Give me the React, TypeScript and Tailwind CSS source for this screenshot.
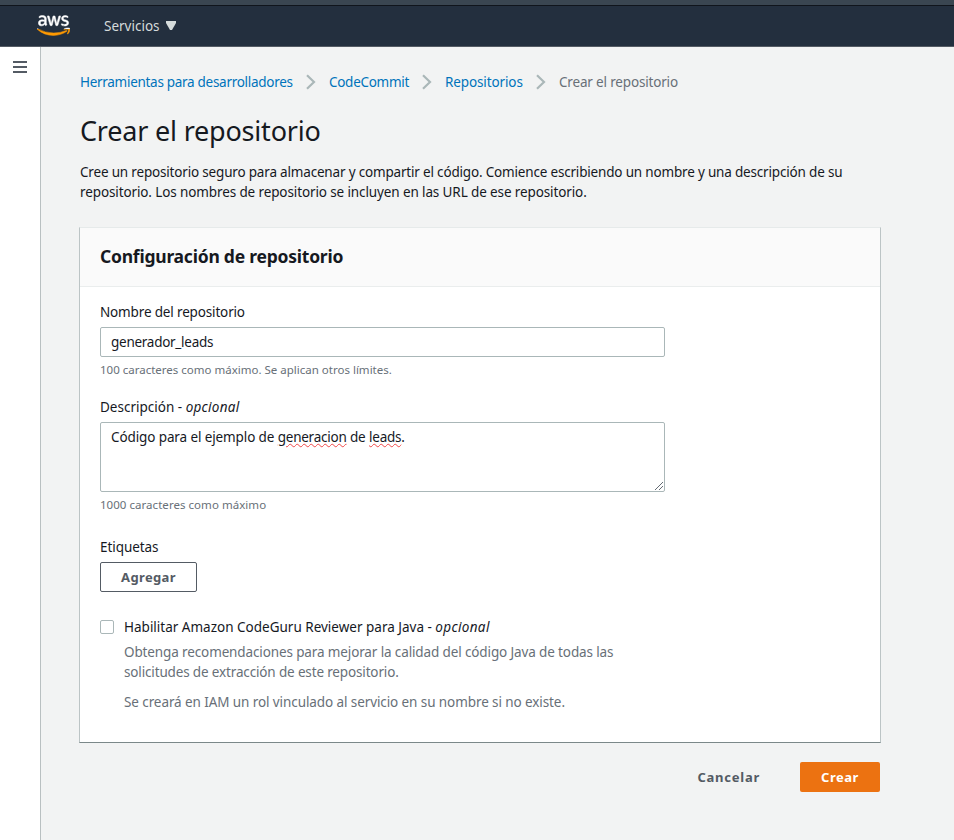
import { FaAws } from "react-icons/fa";
import type { ReactNode } from "react";

function Chevron() {
  return (
    <svg className="mx-[13px] h-4 w-[10px] shrink-0" viewBox="0 0 10 16" fill="none" stroke="#aab7b8" strokeWidth="2.2">
      <path d="M1 1.2 8 8 1 14.8" />
    </svg>
  );
}

function Misspelled({ children }: { children: ReactNode }) {
  return (
    <span className="tracking-[-0.24px] underline decoration-[#f04848] decoration-wavy decoration-[0.6px] underline-offset-1">{children}</span>
  );
}

function TopBar() {
  return (
    <header className="flex h-[47px] shrink-0 items-center border-t-[5px] border-b border-t-[#3a4651] border-b-[#545b64] bg-[#232f3e] pl-[37px] shadow-[inset_0_1px_0_#10151c]">
      <svg width="0" height="0" className="absolute">
        <linearGradient id="aws-logo" x1="0" y1="0" x2="0" y2="1">
          <stop offset="0.66" stopColor="#ffffff" />
          <stop offset="0.66" stopColor="#ff9900" />
        </linearGradient>
      </svg>
      <FaAws className="h-[27px] w-[33px] [&>path]:fill-[url(#aws-logo)] [&>path]:stroke-[url(#aws-logo)] [&>path]:[stroke-width:10]" />
      <span className="ml-[34px] w-[56px] pt-px text-[#d5dbdb]">Servicios</span>
      <svg className="ml-[6px] h-[9px] w-[10px]" viewBox="0 0 10 9" fill="#d5dbdb">
        <path d="M0 0h10v2L6 9H4L0 2z" />
      </svg>
    </header>
  );
}

function Breadcrumbs() {
  return (
    <nav className="flex h-5 items-center whitespace-nowrap text-[#0073bb]">
      <span className="w-[213px] tracking-[-0.29px]">Herramientas para desarrolladores</span>
      <Chevron />
      <span className="w-[80px] tracking-[-0.29px]">CodeCommit</span>
      <Chevron />
      <span className="w-[78px] tracking-[-0.12px]">Repositorios</span>
      <Chevron />
      <span className="tracking-[-0.17px] text-[#687078]">Crear el repositorio</span>
    </nav>
  );
}

export default function App() {
  return (
    <div className="flex h-[840px] w-[954px] flex-col overflow-hidden bg-[#f2f3f3] font-['Noto_Sans',sans-serif] text-[13.5px] leading-5 text-[#16191f]">
      <TopBar />
      <div className="flex flex-1">
        <aside className="w-[41px] shrink-0 border-r border-[#b9c0c1] bg-white pt-[14px] pl-[13px]">
          <div className="flex h-3 w-[14px] flex-col justify-between">
            <div className="h-[2px] bg-[#545b64]" />
            <div className="h-[2px] bg-[#545b64]" />
            <div className="h-[2px] bg-[#545b64]" />
          </div>
        </aside>
        <main className="w-[839px] pt-[25px] pl-[39px] whitespace-nowrap">
          <Breadcrumbs />
          <h1 className="mt-[21px] text-[27px] leading-9 tracking-[-0.2px]">Crear el repositorio</h1>
          <p className="mt-[13px]">
            <span className="tracking-[-0.18px]">
              Cree un repositorio seguro para almacenar y compartir el código. Comience escribiendo un nombre y una descripción de su
            </span>
            <br />
            <span className="tracking-[-0.115px]">repositorio. Los nombres de repositorio se incluyen en las URL de ese repositorio.</span>
          </p>
          <section className="mt-[25px] -ml-px h-[516px] w-[802px] border border-t-[#e6eaea] border-r-[#bcc4c5] border-b-[#7b8889] border-l-[#bcc4c5] bg-white">
            <div className="h-[59px] border-b border-[#eaeded] bg-[#fafafa] px-5 pt-4">
              <h2 className="text-[17.5px] leading-6 font-bold tracking-[-0.23px]">Configuración de repositorio</h2>
            </div>
            <div className="px-5 pt-[15px]">
              <div className="tracking-[-0.155px]">Nombre del repositorio</div>
              <div className="mt-[5px] h-[30px] w-[565px] rounded-[2px] border border-[#aab7b8] px-[10px] pt-1 tracking-[-0.27px]">generador_leads</div>
              <div className="mt-1 text-[11.5px] leading-[18px] text-[#687078]">100 caracteres como máximo. Se aplican otros límites.</div>
              <div className="mt-[18px]">
                Descripción - <em className="tracking-[0.29px]">opcional</em>
              </div>
              <div className="mt-[5px] flex h-[70px] w-[565px] justify-between rounded-[2px] border border-[#aab7b8] pt-1 pl-[10px] tracking-[-0.11px]">
                <span>
                  Código para el ejemplo de <Misspelled>generacion</Misspelled> de <Misspelled>leads</Misspelled>.
                </span>
                <svg className="mr-px mb-px h-2 w-2 self-end" viewBox="0 0 8 8" stroke="#545b64" strokeWidth="0.9">
                  <path d="M0 8 8 0M4 8l4-4" />
                </svg>
              </div>
              <div className="mt-1 text-[11.5px] leading-[18px] tracking-[0.04px] text-[#687078]">1000 caracteres como máximo</div>
              <div className="mt-[23px] tracking-[-0.07px]">Etiquetas</div>
              <button className="mt-[5px] block h-[30px] w-[97px] rounded-[2px] border border-[#545b64] text-[13px] font-bold tracking-[0.35px] text-[#545b64]">
                Agregar
              </button>
              <div className="mt-[25px] flex">
                <div className="mt-[3px] mr-[10px] size-[14px] shrink-0 rounded-[2px] border border-[#aab7b8]" />
                <div>
                  <div>
                    Habilitar Amazon CodeGuru Reviewer para Java - <em className="tracking-[0.35px]">opcional</em>
                  </div>
                  <p className="mt-[5px] text-[#687078]">
                    <span className="tracking-[-0.125px]">Obtenga recomendaciones para mejorar la calidad del código Java de todas las</span>
                    <br />
                    <span className="tracking-[-0.15px]">solicitudes de extracción de este repositorio.</span>
                  </p>
                  <p className="mt-[10px] tracking-[-0.09px] text-[#687078]">Se creará en IAM un rol vinculado al servicio en su nombre si no existe.</p>
                </div>
              </div>
            </div>
          </section>
          <div className="mt-[19px] flex justify-end text-[13px] font-bold">
            <button className="mr-10 h-[30px] tracking-[0.75px] text-[#545b64]">Cancelar</button>
            <button className="h-[30px] w-[80px] rounded-[2px] bg-[#ec7211] tracking-[0.5px] text-white">Crear</button>
          </div>
        </main>
      </div>
    </div>
  );
}
